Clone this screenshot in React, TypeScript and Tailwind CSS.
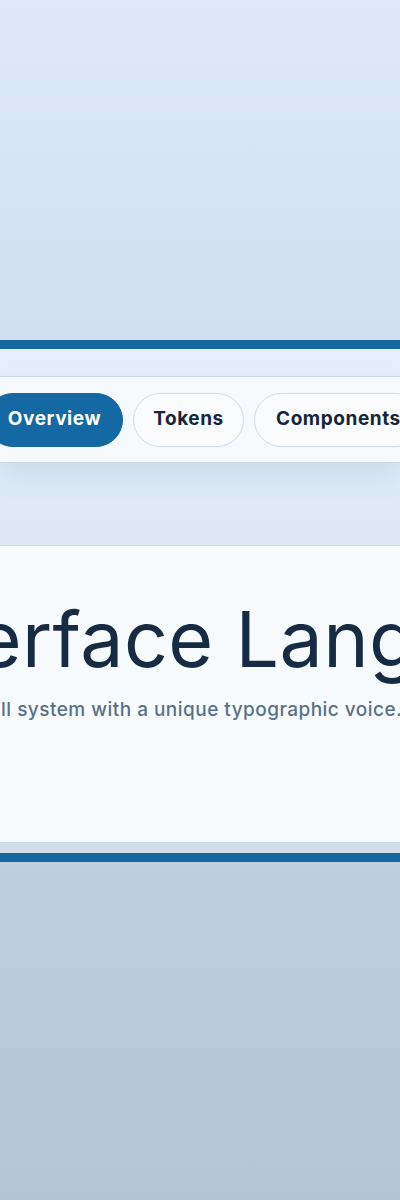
const tabs = [
  { label: 'Overview', size: 'w-[137px]', active: true },
  { label: 'Tokens', size: 'w-[111px]', active: false },
  { label: 'Components', size: 'px-[21px]', active: false },
  { label: 'Patterns', size: 'px-[21px]', active: false },
];

const Tab = ({ label, size, active }: { label: string; size: string; active: boolean }) => (
  <button
    className={
      active
        ? `${size} h-[54px] shrink-0 rounded-full border border-[#1468a4] bg-[#1468a4] text-[19px] font-bold tracking-[0.03em] text-white`
        : `${size} h-[54px] shrink-0 rounded-full border border-[#cfdce6] bg-[#f9fbfd] text-[19px] font-bold tracking-[0.03em] text-[#172538]`
    }
  >
    {label}
  </button>
);

export default function App() {
  return (
    <div className="min-h-[1200px] overflow-hidden bg-gradient-to-b from-[#dde9f8] to-[#b2c5d5] font-['Inter',sans-serif]">
      <div className="h-[340px]" />
      <section className="border-y-[9px] border-[#15679f] bg-gradient-to-b from-[#e4f0fb] to-[#cfdeea] pb-[10px] pt-[27px]">
        <nav className="flex h-[87px] items-center border-y border-[#c9d9e5] bg-[#f7fafd] shadow-[0_12px_30px_rgba(30,70,110,0.10)]">
          <div className="-ml-[14px] flex shrink-0 gap-[10px]">
            {tabs.map((t) => (
              <Tab key={t.label} {...t} />
            ))}
          </div>
        </nav>
        <div className="mt-[82px] h-[298px] border-y border-[#cbdae6] bg-[#f8fbfe] pt-[55px]">
          <h1 className="-ml-[115px] whitespace-nowrap text-[77px] font-normal leading-none tracking-[0.005em] text-[#172c44]">
            Interface Language
          </h1>
          <p className="mt-[18px] -ml-[38px] whitespace-nowrap text-[19px] font-medium leading-[27px] tracking-[0.025em] text-[#587189]">
            A full system with a unique typographic voice.
          </p>
        </div>
      </section>
    </div>
  );
}
